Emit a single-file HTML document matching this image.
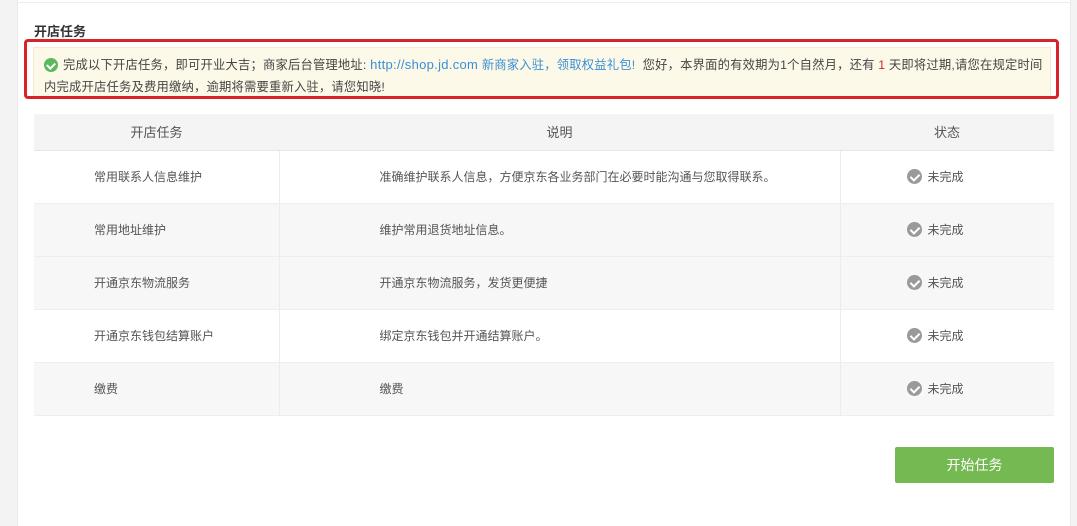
<!DOCTYPE html>
<html><head><meta charset="utf-8"><style>
*{margin:0;padding:0;box-sizing:border-box}
body{width:1077px;height:526px;background:#fff;font-family:"Liberation Sans","Noto Sans CJK SC",sans-serif;font-size:12px;color:#555;position:relative;overflow:hidden}
.ls{position:absolute;left:0;top:0;width:18px;height:526px;background:#f3f3f3;border-right:1px solid #ebebeb}
.rs{position:absolute;left:1070px;top:0;width:7px;height:526px;background:#f3f3f3;border-left:1px solid #ebebeb}
.tl{position:absolute;left:18px;right:7px;top:2px;height:1px;background:#eee}
.title{position:absolute;left:34px;top:21px;font-size:13px;font-weight:bold;color:#333}
.red{position:absolute;left:24px;top:39px;width:1035px;height:60px;border:3px solid #d9232a;border-radius:4px}
.note{position:absolute;left:33px;top:47px;width:1018px;height:50px;background:#fdf9e8;border:1px solid #f3ead0;padding:6px 0 0 10px;line-height:22px;font-size:12.3px;letter-spacing:0.2px;color:#444;white-space:nowrap}
.ok{display:inline-block;width:14px;height:14px;border-radius:50%;background:#5cb85c;vertical-align:-3px;margin-right:5px;position:relative}
.ok:after{content:"";position:absolute;left:4px;top:3px;width:4px;height:6px;border:solid #fff;border-width:0 2px 2px 0;transform:rotate(45deg)}
.blue{color:#3a8fd6}
.url{font-size:13px;letter-spacing:0.3px}
table{position:absolute;left:34px;top:114px;width:1020px;border-collapse:collapse}
th{height:36px;background:#f4f4f4;font-weight:normal;font-size:13px;color:#555;border-bottom:1px solid #e6e6e6}
td{height:53px;border-right:1px solid #ececec;border-bottom:1px solid #eee}
td:last-child{border-right:none}
tr.g td{background:#f7f7f7}
.c1{padding-left:60px;width:245px}
.c2{padding-left:100px;width:561px}
.c3{padding-left:66px}
.st{display:inline-block;width:15px;height:15px;border-radius:50%;background:#9a9a9a;vertical-align:-3px;margin-right:6px;position:relative}
.st:after{content:"";position:absolute;left:5px;top:3px;width:4px;height:7px;border:solid #fff;border-width:0 2px 2px 0;transform:rotate(45deg)}
.btn{position:absolute;left:895px;top:447px;width:159px;height:36px;background:#74b952;color:#fff;font-size:14px;text-align:center;line-height:36px;border-radius:2px}
</style></head><body>
<div class="ls"></div><div class="rs"></div><div class="tl"></div>
<div class="title">开店任务</div>
<div class="note"><span class="ok"></span>完成以下开店任务，即可开业大吉；商家后台管理地址: <span class="blue url">http://shop.jd.com</span> <span class="blue">新商家入驻，领取权益礼包!</span>&nbsp; 您好，本界面的有效期为1个自然月，还有 <span style="color:#d9232a">1</span> 天即将过期,请您在规定时间<br>内完成开店任务及费用缴纳，逾期将需要重新入驻，请您知晓!</div>
<div class="red"></div>
<table>
<tr><th style="width:245px">开店任务</th><th style="width:561px">说明</th><th>状态</th></tr>
<tr><td class="c1">常用联系人信息维护</td><td class="c2">准确维护联系人信息，方便京东各业务部门在必要时能沟通与您取得联系。</td><td class="c3"><span class="st"></span>未完成</td></tr>
<tr class="g"><td class="c1">常用地址维护</td><td class="c2">维护常用退货地址信息。</td><td class="c3"><span class="st"></span>未完成</td></tr>
<tr class="g"><td class="c1">开通京东物流服务</td><td class="c2">开通京东物流服务，发货更便捷</td><td class="c3"><span class="st"></span>未完成</td></tr>
<tr><td class="c1">开通京东钱包结算账户</td><td class="c2">绑定京东钱包并开通结算账户。</td><td class="c3"><span class="st"></span>未完成</td></tr>
<tr class="g"><td class="c1">缴费</td><td class="c2">缴费</td><td class="c3"><span class="st"></span>未完成</td></tr>
</table>
<div class="btn">开始任务</div>
</body></html>
